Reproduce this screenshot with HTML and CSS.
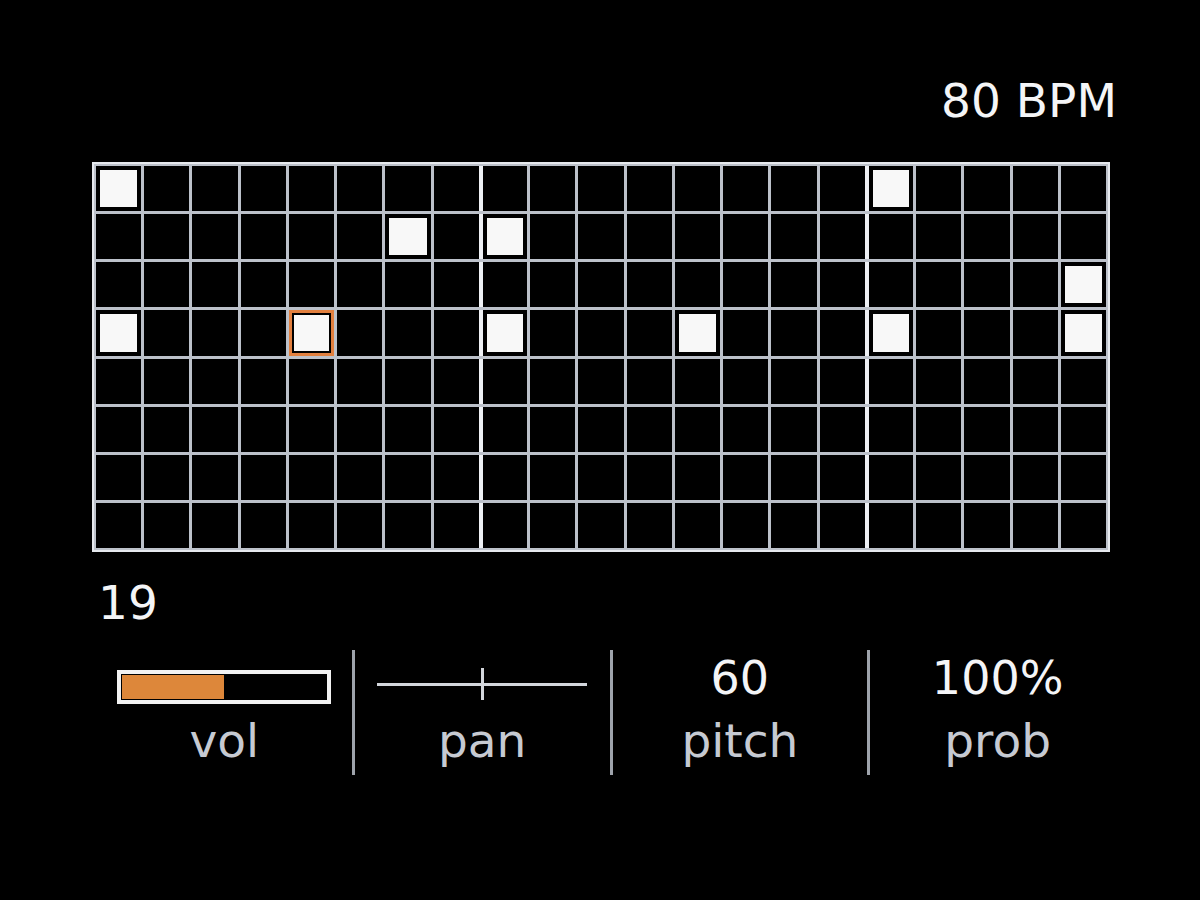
FILE: index.html
```html
<!DOCTYPE html>
<html lang="en">
<head>
    <meta charset="UTF-8">
    <meta name="viewport" content="width=device-width, initial-scale=1.0">
    <title>Sequencer</title>
    <link rel="stylesheet" href="styles.css">
</head>
<body>
    <div class="screen">
        <div class="header">80 BPM</div>
        <div id="grid" class="grid"></div>
        <div class="step">19</div>
        <div class="params">
            <div class="param">
                <div class="top">
                    <div class="vol-bar"><div class="vol-fill" style="width: 50%;"></div></div>
                </div>
                <div class="label">vol</div>
            </div>
            <div class="param">
                <div class="top">
                    <div class="pan-line"><div class="pan-tick"></div></div>
                </div>
                <div class="label">pan</div>
            </div>
            <div class="param">
                <div class="top"><span class="value">60</span></div>
                <div class="label">pitch</div>
            </div>
            <div class="param">
                <div class="top"><span class="value">100%</span></div>
                <div class="label">prob</div>
            </div>
        </div>
    </div>
    <script>
        const cols = 21;
        const rows = 8;
        // notes per row (column indexes)
        const notes = {
            0: [0, 16],
            1: [6, 8],
            2: [20],
            3: [0, 4, 8, 12, 16, 20]
        };
        const cursor = { row: 3, col: 4 };

        const grid = document.getElementById('grid');
        for (let r = 0; r < rows; r++) {
            for (let c = 0; c < cols; c++) {
                const cell = document.createElement('div');
                cell.className = 'cell';
                if (c === 8 || c === 16) cell.classList.add('bar-start');
                if (r === cursor.row && c === cursor.col) cell.classList.add('cursor');
                if (notes[r] && notes[r].includes(c)) {
                    const note = document.createElement('span');
                    note.className = 'note';
                    cell.appendChild(note);
                }
                grid.appendChild(cell);
            }
        }
    </script>
</body>
</html>
```

FILE: styles.css
```css
body {
    margin: 0;
    background: #000;
    color: #f4f5f7;
    font-family: 'DejaVu Sans', sans-serif;
}
.screen {
    width: 1018px;
    padding: 78px 0 0 92px;
}
.header {
    font-size: 47px;
    line-height: 46px;
    text-align: right;
    margin-right: -7px;
}
.grid {
    margin-top: 38px;
    box-sizing: border-box;
    width: 1018px;
    height: 390px;
    display: grid;
    grid-template-columns: repeat(21, 1fr);
    grid-template-rows: repeat(8, 1fr);
    gap: 3px;
    padding: 2px;
    border: 2px solid #e6e9ee;
    background: #bcc1ca;
}
.cell {
    background: #000;
    display: flex;
    box-sizing: border-box;
}
.cell.bar-start {
    border-left: 1px solid #eef0f4;
    box-shadow: -3px 0 0 #eef0f4;
}
.cell.cursor {
    box-shadow: inset 0 0 0 3px #e2803f;
}
.note {
    flex: 1;
    margin: 4px;
    background: #f8f8f8;
}
.cursor .note {
    margin: 5px;
}
.step {
    margin-top: 28px;
    padding-left: 6px;
    font-size: 47px;
    line-height: 46px;
}
.params {
    margin-top: 24px;
    margin-left: 5px;
    width: 1028px;
    display: flex;
    height: 125px;
}
.param {
    flex: 1;
    display: flex;
    flex-direction: column;
    align-items: center;
    padding-top: 5px;
}
.param + .param {
    border-left: 3px solid #9ea3ab;
}
.top {
    height: 46px;
    display: flex;
    align-items: center;
    justify-content: center;
}
.value {
    font-size: 46px;
    line-height: 46px;
}
.label {
    margin-top: 17px;
    font-size: 47px;
    line-height: 46px;
    color: #c6cad2;
}
.vol-bar {
    margin-top: 18px;
    box-sizing: border-box;
    width: 214px;
    height: 34px;
    border: 4px solid #f2f2f2;
    padding: 1px;
    background: #000;
    display: flex;
}
.vol-fill {
    background: #dd873a;
}
.pan-line {
    margin-top: 12px;
    width: 210px;
    height: 3px;
    background: #d3d6dc;
    display: flex;
    justify-content: center;
    align-items: center;
}
.pan-tick {
    width: 3px;
    height: 32px;
    background: #d3d6dc;
}
```
